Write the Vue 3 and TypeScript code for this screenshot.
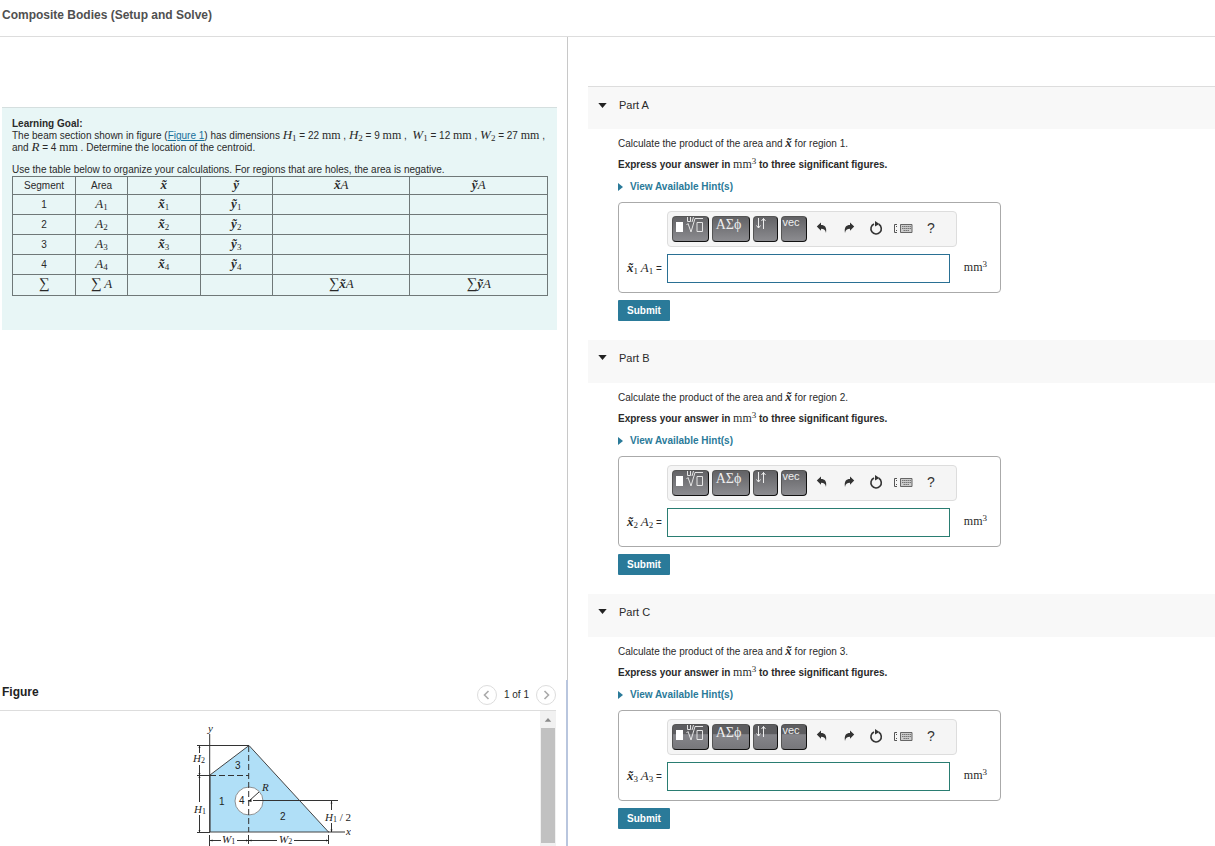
<script setup lang="ts">
import { ref } from 'vue'

interface Part {
  letter: string
  region: number
}

const parts: Part[] = [
  { letter: 'A', region: 1 },
  { letter: 'B', region: 2 },
  { letter: 'C', region: 3 },
]
const segments: number[] = [1, 2, 3, 4]
const answers = ref<string[]>(['', '', ''])
</script>

<template>
  <div class="page">
    <header class="top">
      <h1>Composite Bodies (Setup and Solve)</h1>
    </header>
    <div class="columns">
      <section class="left">
        <div class="goal">
          <p><b>Learning Goal:</b></p>
          <p>
            The beam section shown in figure (<a href="#figure">Figure 1</a>) has dimensions
            <i class="m">H<sub>1</sub></i> = 22 <span class="u">mm</span> ,
            <i class="m">H<sub>2</sub></i> = 9 <span class="u">mm</span> ,&nbsp;
            <i class="m">W<sub>1</sub></i> = 12 <span class="u">mm</span> ,
            <i class="m">W<sub>2</sub></i> = 27 <span class="u">mm</span> ,
            <br />and <i class="m">R</i> = 4 <span class="u">mm</span> . Determine the location of the centroid.
          </p>
          <p class="use">Use the table below to organize your calculations. For regions that are holes, the area is negative.</p>
          <table>
            <colgroup>
              <col class="c1" /><col class="c2" /><col class="c3" /><col class="c3" /><col class="c4" /><col class="c4" />
            </colgroup>
            <thead>
              <tr>
                <th scope="col">Segment</th>
                <th scope="col">Area</th>
                <th scope="col"><i class="m t">x̃</i></th>
                <th scope="col"><i class="m t">ỹ</i></th>
                <th scope="col"><i class="m t">x̃</i><i class="m">A</i></th>
                <th scope="col"><i class="m t">ỹ</i><i class="m">A</i></th>
              </tr>
            </thead>
            <tbody>
              <tr v-for="n in segments" :key="n">
                <td>{{ n }}</td>
                <td><i class="m">A<sub>{{ n }}</sub></i></td>
                <td><i class="m t">x̃<sub>{{ n }}</sub></i></td>
                <td><i class="m t">ỹ<sub>{{ n }}</sub></i></td>
                <td></td>
                <td></td>
              </tr>
              <tr class="sum">
                <td><span class="s">∑</span></td>
                <td><span class="s">∑</span> <i class="m">A</i></td>
                <td></td>
                <td></td>
                <td><span class="s">∑</span><i class="m t">x̃</i><i class="m">A</i></td>
                <td><span class="s">∑</span><i class="m t">ỹ</i><i class="m">A</i></td>
              </tr>
            </tbody>
          </table>
        </div>

        <div id="figure" class="figure">
          <div class="fighead">
            <h2>Figure</h2>
            <nav class="pager">
              <button type="button" class="round" aria-label="Previous figure">
                <svg viewBox="0 0 18 18"><path d="M10.500 5 6.500 9l4 4" /></svg>
              </button>
              <span>1 of 1</span>
              <button type="button" class="round" aria-label="Next figure">
                <svg viewBox="0 0 18 18"><path d="M7.500 5 11.500 9l-4 4" /></svg>
              </button>
            </nav>
          </div>
          <div class="view">
            <div class="canvas">
              <svg class="beam" viewBox="189 720 162 126" width="162" height="126">
                <path class="fill" d="M210 775 249 745.500 328.500 832H210z" />
                <circle cx="249" cy="801" r="14" fill="#fff" stroke="#777" stroke-width=".8" />
                <g class="ln">
                  <path d="M209.700 734v98M328 832h17M197 745.500h52M197 775.500h13M197 832.500h13" />
                  <path d="M199.500 745v8M199.500 765v37M199.500 815v17" />
                  <path d="M253 800.500h85M331.500 801v9M331.500 823v9" />
                  <path d="M209.500 835v11M248.500 835v9M328.500 835v9M210 840.500h11M237 840.500h40M294 840.500h35" />
                  <path d="M249 801l10-9" />
                </g>
                <path class="dash" d="M248.700 746v86M210 775.500h39" />
                <path d="M198.500 748l1-2.500 1 2.500zM198.500 773l1 2.500 1-2.500zM198.500 778l1-2.500 1 2.500zM198.500 830l1 2 1-2zM330.500 803.500l1-2.500 1 2.500zM330.500 829.500l1 2.500 1-2.500zM212.500 839.500l-2.500 1 2.500 1zM246 839.500l2.500 1-2.500 1zM251.500 839.500l-2.500 1 2.500 1zM326 839.500l2.500 1-2.500 1zM247.500 801l4-2v3z" fill="#222" />
                <g class="txt">
                  <text class="it" x="208" y="732">y</text>
                  <text class="it" x="346" y="835">x</text>
                  <text class="it" x="193" y="762">H<tspan class="sb" dy="1">2</tspan></text>
                  <text class="it" x="194" y="813">H<tspan class="sb" dy="1">1</tspan></text>
                  <text class="it" x="325" y="821">H<tspan class="sb" dy="1">1</tspan><tspan class="up" dy="-1"> / 2</tspan></text>
                  <text class="it" x="222" y="843">W<tspan class="sb" dy="1">1</tspan></text>
                  <text class="it" x="279" y="843">W<tspan class="sb" dy="1">2</tspan></text>
                  <text class="it" x="262" y="791">R</text>
                  <text class="num" x="219" y="805">1</text>
                  <text class="num" x="280" y="820">2</text>
                  <text class="num" x="235" y="769">3</text>
                  <text class="num" x="239" y="804">4</text>
                </g>
              </svg>
            </div>
            <div class="scroll">
              <svg viewBox="0 0 15 17"><path d="M4 11 7.500 7 11 11z" fill="#8b8b8b" /></svg>
              <div class="thumb"></div>
            </div>
          </div>
        </div>
      </section>

      <main class="right">
        <section v-for="(p, i) in parts" :key="p.letter" class="part">
          <header class="parthead">
            <svg viewBox="0 0 10 6" width="9" height="5"><path d="M0 0h10L5 6z" fill="#222" /></svg>
            <h2>Part {{ p.letter }}</h2>
          </header>
          <div class="body">
            <p>Calculate the product of the area and <i class="m t">x̃</i> for region {{ p.region }}.</p>
            <p class="express">Express your answer in <span class="u">mm<sup>3</sup></span> to three significant figures.</p>
            <a class="hint" href="#hints">
              <svg viewBox="0 0 5 8" width="5" height="8"><path d="M0 0 5 4 0 8z" fill="#2a7a99" /></svg>
              View Available Hint(s)
            </a>
            <div class="box">
              <div class="tools" :class="{ split: i === 2 }">
                <button type="button" class="key k1" aria-label="Templates">
                  <svg viewBox="0 0 37 26" width="37" height="26">
                    <path d="M4 6h7v10H4z" fill="#fff" />
                    <path d="M14.500 9l1.500-1.500 3 8.500 4-13.500h8M25 6.500h5.500v9H25zM15.500 1v4.500h3V1M21.500 1l-1.500 5" fill="none" stroke="#e4e4e4" />
                  </svg>
                </button>
                <button type="button" class="key k2">ΑΣϕ</button>
                <button type="button" class="key k3" aria-label="Subscript and superscript">
                  <svg viewBox="0 0 25 26" width="25" height="26">
                    <path d="M5.500 2v10M3.500 9.500l2 2.500 2-2.500M10.500 13V2.500M8.500 5l2-2.500 2 2.500" fill="none" stroke="#eee" />
                  </svg>
                </button>
                <button type="button" class="key k4">vec</button>
                <button type="button" class="ico" aria-label="Undo">
                  <svg viewBox="0 0 12 12" width="12" height="12"><path d="M.800 4.500 5 .600v2.300c3.800 0 6 2.200 5 8.100-.500-3-2-4.300-5-4.300v2.100z" /></svg>
                </button>
                <button type="button" class="ico" aria-label="Redo">
                  <svg viewBox="0 0 12 12" width="12" height="12"><path d="M11.200 4.500 7 .600v2.300c-3.800 0-6 2.200-5 8.100.500-3 2-4.300 5-4.300v2.100z" /></svg>
                </button>
                <button type="button" class="ico" aria-label="Reset">
                  <svg viewBox="0 0 14 14" width="14" height="14">
                    <path d="M9.800 3.300A5.200 5.200 0 1 1 5 3" fill="none" stroke="#333" stroke-width="1.600" />
                    <path d="M6 0l4.500 3L6 5.600z" />
                  </svg>
                </button>
                <button type="button" class="ico kb" aria-label="Keyboard shortcuts">
                  <svg viewBox="0 0 19 10" width="19" height="10">
                    <path d="M3 .500H.500v8H3M2.500 2v1M2.500 6v1" fill="none" stroke="#555" />
                    <path d="M6.500.500h11.500v8H6.500z" fill="#ccc" stroke="#666" />
                    <path d="M8 2.500h9M8 4.500h9M9.500 6.500h5.500" stroke="#777" stroke-dasharray="1.500 .500" />
                  </svg>
                </button>
                <button type="button" class="ico help" aria-label="Help">?</button>
              </div>
              <label :for="'answer' + p.letter">
                <i class="m t">x̃<sub>{{ p.region }}</sub></i> <i class="m">A<sub>{{ p.region }}</sub></i> =
              </label>
              <input :id="'answer' + p.letter" v-model="answers[i]" type="text" :class="{ green: i > 0 }" />
              <span class="u unit">mm<sup>3</sup></span>
            </div>
            <button type="button" class="submit">Submit</button>
          </div>
        </section>
      </main>
    </div>
  </div>
</template>

<style>
body {
  margin: 0;
  background: #fff;
}
</style>

<style scoped>
* {
  box-sizing: border-box;
}
.page {
  height: 100vh;
  min-height: 640px;
  overflow: hidden;
  display: flex;
  flex-direction: column;
  font: 10px/12px "Liberation Sans", Arial, sans-serif;
  color: #2a2a2a;
}
h1,
h2,
p {
  margin: 0;
}
button {
  font: inherit;
  padding: 0;
  border: 0;
  background: none;
}
.top {
  flex: none;
  height: 37px;
  padding: 7px 2px;
  border-bottom: 1px solid #ddd;
}
h1 {
  font-size: 12px;
  line-height: 16px;
  color: #505050;
}
.columns {
  flex: 1;
  min-height: 0;
  display: flex;
}
.left {
  width: 568px;
  flex: none;
  border-right: 1px solid #c8c8c8;
  display: flex;
  flex-direction: column;
  justify-content: space-between;
}
.goal {
  margin: 70px 10px 0 2px;
  padding: 10px 9px 34px 10px;
  border-top: 1px solid #d5dfdf;
  background: #e8f6f6;
}
.goal p {
  white-space: nowrap;
}
.goal a {
  color: #17709b;
}
.goal .use {
  margin-top: 10px;
}
.m,
.u,
.s {
  font-family: "Liberation Serif", "Times New Roman", serif;
  line-height: 1px;
}
.m {
  font-size: 13px;
  font-style: italic;
}
.t {
  font-weight: bold;
}
.u {
  font-size: 12px;
  font-weight: normal;
}
.s {
  font-size: 15px;
}
sub,
sup {
  font-size: 9px;
  line-height: 1px;
  font-style: normal;
}
sub {
  vertical-align: -2px;
  font-weight: normal;
}
sup {
  vertical-align: 4px;
}
table {
  width: 100%;
  border-collapse: collapse;
  table-layout: fixed;
}
th,
td {
  height: 20px;
  padding: 0;
  border: 1px solid #6f7878;
  text-align: center;
  font-weight: normal;
}
th {
  height: 18px;
}
.sum td {
  height: 21px;
}
.c1 { width: 11.8%; }
.c2 { width: 9.7%; }
.c3 { width: 13.55%; }
.c4 { width: 25.7%; }
.figure {
  height: 166px;
  margin-right: -1px;
  padding-right: 10px;
  border-right: 2px solid #b9c6de;
  display: flex;
  flex-direction: column;
}
.fighead {
  height: 31px;
  padding-left: 2px;
  border-bottom: 1px solid #ddd;
  display: flex;
  justify-content: space-between;
}
.fighead h2 {
  font-size: 12px;
  line-height: 24px;
  color: #222;
}
.pager {
  display: flex;
  align-items: center;
  gap: 7px;
}
.round {
  width: 20px;
  height: 20px;
  border: 1px solid #ddd;
  border-radius: 50%;
}
.round svg {
  display: block;
  width: 18px;
  height: 18px;
  fill: none;
  stroke: #aaa;
  stroke-width: 1.6;
}
.view {
  flex: 1;
  display: flex;
}
.canvas {
  flex: 1;
  display: flex;
  justify-content: center;
  align-items: flex-end;
}
.beam .fill {
  fill: #b0dff7;
  stroke: #444;
}
.ln {
  fill: none;
  stroke: #333;
  stroke-width: 1;
}
.dash {
  fill: none;
  stroke: #333;
  stroke-dasharray: 6 3;
}
.txt {
  font: 11px "Liberation Serif", serif;
  fill: #222;
}
.it {
  font-style: italic;
}
.num {
  font: 10px "Liberation Sans", Arial, sans-serif;
}
.sb {
  font-size: 8px;
  font-style: normal;
}
.up {
  font-style: normal;
}
.scroll {
  width: 16px;
  padding: 0 1px 3px;
  background: #f1f1f1;
  display: flex;
  flex-direction: column;
}
.scroll svg {
  height: 17px;
}
.thumb {
  flex: 1;
  background: #c1c1c1;
}
.right {
  flex: 1;
  min-width: 0;
  padding: 49px 0 0 20px;
}
.part {
  height: 254px;
}
.parthead {
  height: 43px;
  padding: 0 10px 8px;
  background: #f8f8f8;
  display: flex;
  align-items: center;
  gap: 12px;
}
.part:first-child .parthead {
  padding-bottom: 6px;
  border-top: 1px solid #ddd;
}
.parthead h2 {
  font-size: 11px;
  font-weight: normal;
}
.body {
  padding: 8px 0 0 30px;
  display: flex;
  flex-direction: column;
  align-items: flex-start;
}
.body p,
.hint {
  line-height: 14px;
}
.express {
  margin-top: 7px;
  font-weight: bold;
}
.hint {
  margin-top: 8px;
  display: flex;
  align-items: center;
  gap: 7px;
  color: #2a7a99;
  font-weight: bold;
  text-decoration: none;
}
.box {
  width: 383px;
  max-width: 100%;
  height: 91px;
  margin-top: 8px;
  padding: 8px 13px 8px 8px;
  border: 1px solid #aaa;
  border-radius: 4px;
  display: grid;
  grid-template-columns: 40px 1fr 25px;
  grid-template-rows: 36px 29px;
  row-gap: 7px;
  align-items: center;
}
.box input {
  width: 283px;
  max-width: 100%;
  height: 29px;
  padding: 0 6px;
  border: 1px solid #2a7094;
  background: #fff;
}
.box input.green {
  border-color: #2a7d72;
}
.box label {
  white-space: nowrap;
}
.unit {
  justify-self: end;
  padding-bottom: 6px;
}
.tools {
  grid-column: 2 / 4;
  width: 290px;
  height: 36px;
  padding: 0 4px;
  border: 1px solid #ddd;
  border-radius: 4px;
  background: #f5f5f5;
  display: flex;
  align-items: center;
  gap: 3px;
}
.key {
  height: 26px;
  flex: none;
  border: 1px solid #111;
  border-top-color: #555;
  border-left-color: #555;
  border-radius: 4px;
  background: linear-gradient(#626265, #8c8c90);
  color: #eee;
  display: flex;
  align-items: flex-start;
  justify-content: center;
  overflow: hidden;
}
.split .key {
  background: linear-gradient(#5d5d60 0 38%, #85858a 40%, #77777b);
}
.key svg {
  flex: none;
  margin: -1px;
}
.k1 { width: 37px; }
.k2 {
  width: 38px;
  padding-right: 5px;
  font: 14px/16px "Liberation Serif", serif;
}
.k3 { width: 25px; }
.k4 {
  width: 26px;
  padding-right: 6px;
  font-size: 11px;
  line-height: 11px;
}
.ico {
  width: 24px;
  height: 26px;
  padding-bottom: 3px;
  display: flex;
  align-items: center;
  justify-content: center;
  fill: #333;
}
.kb {
  padding-bottom: 0;
}
.help {
  width: 26px;
  font-size: 14px;
  color: #333;
}
.submit {
  width: 52px;
  height: 21px;
  margin-top: 7px;
  border-radius: 1px;
  background: #2a7a99;
  color: #fff;
  font-size: 10px;
  font-weight: bold;
}
</style>
